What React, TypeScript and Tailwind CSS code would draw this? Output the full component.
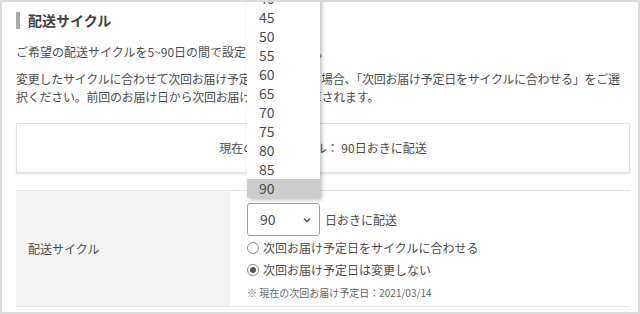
const options = [40, 45, 50, 55, 60, 65, 70, 75, 80, 85, 90];

function Radio({ checked }: { checked?: boolean }) {
  return (
    <span className="flex h-[12px] w-[12px] items-center justify-center rounded-full border border-[#8a8a8a] bg-white">
      {checked && <span className="h-[6px] w-[6px] rounded-full bg-[#555]" />}
    </span>
  );
}

export default function App() {
  return (
    <div
      className="h-[314px] w-[640px] overflow-hidden border-2 border-[#dadada] bg-white text-[#4d4d4d]"
      style={{ fontFamily: '"Noto Sans CJK JP", "Noto Sans", sans-serif' }}
    >
      <div className="relative h-full pl-[14px] pr-[6px] pt-[8px]">
        <div className="flex h-[20px] items-center">
          <span className="h-[17px] w-[4px] bg-[#aaaaaa]" />
          <h2 className="ml-[8px] text-[14px] font-bold text-[#3f3f3f]">配送サイクル</h2>
        </div>

        <p className="mt-[13px] text-[12px] leading-[18px]">
          ご希望の配送サイクルを5~90日の間で設定してください。
        </p>
        <p className="mt-[9px] whitespace-nowrap text-[12px] leading-[18px] tracking-[-0.25px]">
          変更したサイクルに合わせて次回お届け予定日を変更する場合、「次回お届け予定日をサイクルに合わせる」をご選
          <br />
          択ください。前回のお届け日から次回お届け予定日が計算されます。
        </p>

        <div className="mt-[17px] flex h-[50px] w-[614px] items-center justify-center border border-[#e2e2e2] text-[12px] shadow-[0_2px_2px_rgba(0,0,0,0.08)]">
          現在の配送サイクル： 90日おきに配送
        </div>

        <div className="mt-[17px] flex w-[614px] border-y border-[#e6e6e6]">
          <div className="flex w-[214px] items-center bg-[#f3f3f3] pl-[12px] text-[12px]">配送サイクル</div>
          <div className="flex h-[115px] flex-col pl-[17px] pt-[12px]">
            <div className="flex items-center">
              <div className="flex h-[33px] w-[73px] items-center justify-between rounded-[3px] border border-[#6aaee8] pl-[12px] pr-[8px] text-[14px]">
                <span>90</span>
                <svg width="8" height="6" viewBox="0 0 8 6" className="text-[#555]">
                  <path d="M1 1.5 L4 4.5 L7 1.5" fill="none" stroke="currentColor" strokeWidth="1.6" />
                </svg>
              </div>
              <span className="ml-[5px] text-[12px]">日おきに配送</span>
            </div>
            <label className="mt-[1px] flex h-[22px] items-center gap-[4px] text-[12px]">
              <Radio />
              次回お届け予定日をサイクルに合わせる
            </label>
            <label className="flex h-[22px] items-center gap-[4px] text-[12px]">
              <Radio checked />
              次回お届け予定日は変更しない
            </label>
            <p className="flex h-[22px] items-center text-[10px] text-[#666]">
              ※ 現在の次回お届け予定日：2021/03/14
            </p>
          </div>
        </div>

        <ul className="absolute left-[245px] top-[-13px] w-[73px] bg-white text-[14px] shadow-[2px_2px_4px_rgba(0,0,0,0.25)]">
          {options.map((n) => (
            <li
              key={n}
              className={`flex h-[19px] items-center pl-[12px] ${n === 90 ? 'bg-[#cccccc]' : ''}`}
            >
              {n}
            </li>
          ))}
        </ul>
      </div>
    </div>
  );
}
